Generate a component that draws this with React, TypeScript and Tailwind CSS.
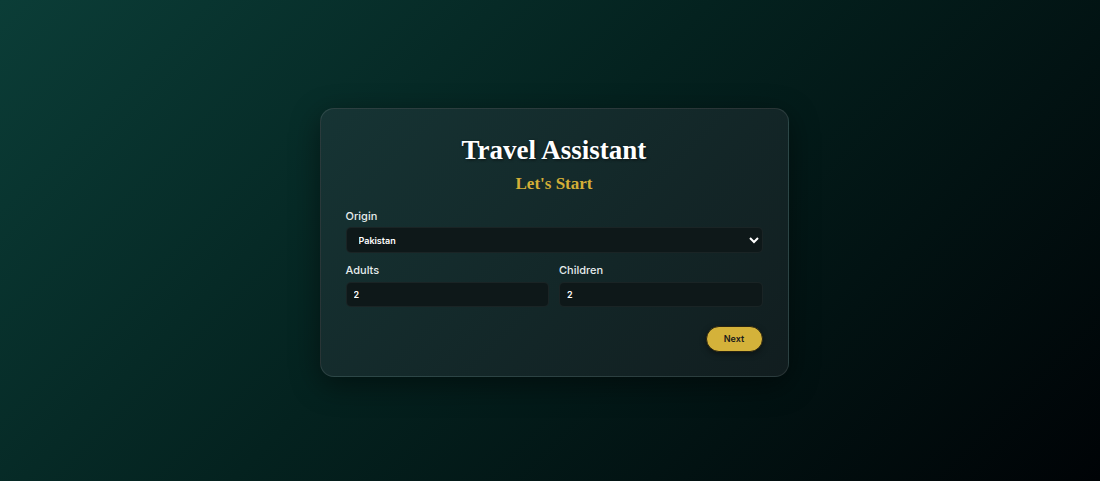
import { useState } from "react";

const countries = ["Pakistan", "India", "United Arab Emirates", "Turkey", "United Kingdom"];

export default function App() {
  const [origin, setOrigin] = useState("Pakistan");
  const [adults, setAdults] = useState("2");
  const [children, setChildren] = useState("2");

  return (
    <div className="flex min-h-[481px] w-full items-center justify-center bg-[linear-gradient(135deg,#0b3d37_0%,#04221f_45%,#000306_100%)] pl-[8px] pt-[4px] font-['Inter',sans-serif]">
      <div className="flex w-[469px] flex-col rounded-[14px] border border-white/10 bg-[linear-gradient(135deg,#163434,#111d1f)] px-[25px] pb-[24px] pt-[24px] shadow-[0_8px_30px_rgba(0,0,0,0.45)]">
        {/* Heading */}
        <h1 className="text-center font-['Liberation_Serif',serif] text-[27px] font-bold leading-[34px] text-white [text-shadow:1px_1px_3px_rgba(0,0,0,0.6)]">
          Travel Assistant
        </h1>
        <h2 className="mt-[7px] text-center font-['Liberation_Serif',serif] text-[17px] font-bold leading-[20px] text-[#d4af37]">
          Let's Start
        </h2>

        {/* Origin */}
        <label className="mt-[15px] text-[11px] font-medium leading-[14px] text-[#e6ecec]">Origin</label>
        <select
          value={origin}
          onChange={(e) => setOrigin(e.target.value)}
          className="mt-[4px] box-border h-[26px] w-full rounded-[5px] border border-white/5 bg-[#0e1819] pl-[8px] pr-[2px] text-[9px] font-semibold text-white outline-none"
        >
          {countries.map((c) => (
            <option key={c} value={c}>
              {c}
            </option>
          ))}
        </select>

        {/* Travellers */}
        <div className="mt-[10px] grid grid-cols-2 gap-[10px]">
          <div className="flex flex-col">
            <label className="text-[11px] font-medium leading-[14px] text-[#e6ecec]">Adults</label>
            <input
              value={adults}
              onChange={(e) => setAdults(e.target.value)}
              className="mt-[5px] h-[25px] w-full rounded-[5px] border border-white/5 bg-[#0e1819] px-[7px] text-[9px] font-semibold text-white outline-none"
            />
          </div>
          <div className="flex flex-col">
            <label className="text-[11px] font-medium leading-[14px] text-[#e6ecec]">Children</label>
            <input
              value={children}
              onChange={(e) => setChildren(e.target.value)}
              className="mt-[5px] h-[25px] w-full rounded-[5px] border border-white/5 bg-[#0e1819] px-[7px] text-[9px] font-semibold text-white outline-none"
            />
          </div>
        </div>

        <div className="mt-[19px] flex justify-end">
          <button className="h-[26px] w-[57px] rounded-full border border-[#2a2410] bg-[#d4b23a] text-[9px] font-semibold text-[#1a1a1a] shadow-[0_2px_6px_rgba(0,0,0,0.4)]">
            Next
          </button>
        </div>
      </div>
    </div>
  );
}
